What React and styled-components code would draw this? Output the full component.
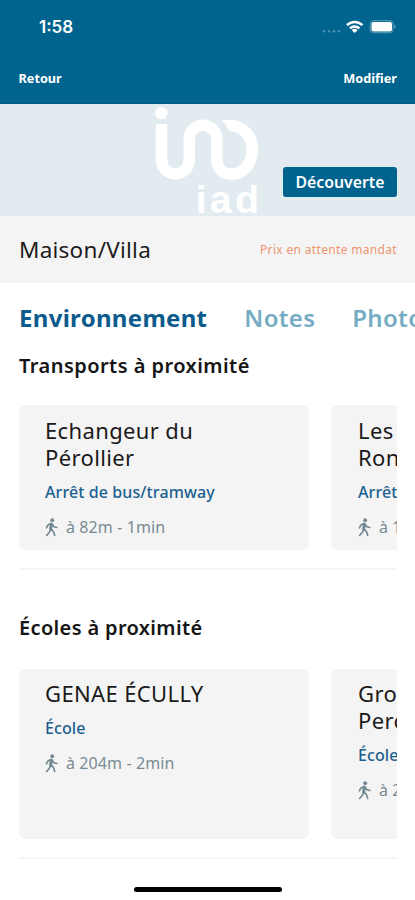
import styled, { createGlobalStyle } from "styled-components";

const GlobalStyle = createGlobalStyle`
  * {
    box-sizing: border-box;
    margin: 0;
    padding: 0;
  }
  body {
    background: #ffffff;
    font-family: "Noto Sans", "Open Sans", sans-serif;
    overflow: hidden;
  }
  button {
    border: none;
    background: none;
    font-family: inherit;
  }
`;

const Screen = styled.div`
  display: flex;
  flex-direction: column;
  width: 415px;
  height: 900px;
  overflow: hidden;
  background: #ffffff;
`;

const Header = styled.header`
  height: 104px;
  flex-shrink: 0;
  background: #00648f;
  border-bottom: 1px solid #00558a;
  color: #ffffff;
`;

const StatusBar = styled.div`
  display: flex;
  justify-content: space-between;
  align-items: center;
  height: 54px;
  padding: 0 18px 0 39px;
`;

const Time = styled.span`
  font-family: Inter, sans-serif;
  font-size: 17px;
  font-weight: 600;
  line-height: 20px;
`;

const NavBar = styled.div`
  display: flex;
  justify-content: space-between;
  align-items: center;
  height: 48px;
  padding: 0 18px 0 18.5px;
`;

const NavButton = styled.button`
  color: #ffffff;
  font-size: 12.7px;
  font-weight: 700;
`;

const Banner = styled.div`
  position: relative;
  display: flex;
  justify-content: center;
  height: 112px;
  flex-shrink: 0;
  background: #e1ebf0;
`;

const Badge = styled.div`
  position: absolute;
  right: 18px;
  bottom: 19px;
  display: flex;
  justify-content: center;
  align-items: center;
  width: 114px;
  height: 30px;
  border-radius: 3px;
  background: #00648f;
  color: #ffffff;
  font-size: 15.8px;
  font-weight: 600;
`;

const PropertyBar = styled.div`
  display: flex;
  justify-content: space-between;
  align-items: center;
  height: 67px;
  flex-shrink: 0;
  padding: 0 18px 0 19px;
  background: #f4f4f4;
`;

const PropertyType = styled.h1`
  color: #1c1c1c;
  font-size: 22.5px;
  font-weight: 400;
  letter-spacing: 0.25px;
  line-height: 30px;
`;

const Price = styled.span`
  color: #ee9470;
  font-size: 12px;
  letter-spacing: 0.33px;
`;

const Tabs = styled.nav`
  display: flex;
  gap: 37px;
  height: 63px;
  flex-shrink: 0;
  padding: 17px 0 0 19px;
  overflow: hidden;
`;

const Tab = styled.button`
  flex-shrink: 0;
  height: 36px;
  color: ${({ $active }) => ($active ? "#0b5b8c" : "#76acc3")};
  font-size: 24px;
  font-weight: ${({ $active }) => ($active ? 700 : 600)};
  letter-spacing: 0.3px;
  line-height: 36px;
`;

const Section = styled.section`
  display: flex;
  flex-direction: column;
  flex-shrink: 0;
  margin: 0 18px 0 19px;
  padding-bottom: ${({ $gap }) => $gap}px;
  border-bottom: 2px solid #f6f6f6;
`;

const SectionTitle = styled.h2`
  height: ${({ $height }) => $height}px;
  padding-top: 5px;
  color: #151515;
  font-size: 20px;
  font-weight: 600;
  letter-spacing: ${({ $spacing }) => $spacing}px;
  line-height: 30px;
`;

const CardList = styled.div`
  display: flex;
  gap: 22px;
  height: ${({ $height }) => $height}px;
  overflow: hidden;
`;

const Card = styled.article`
  width: 290px;
  flex-shrink: 0;
  padding: ${({ $top }) => $top}px 26px 0;
  border-radius: 7px;
  background: #f4f4f4;

  & + & {
    padding-left: 27px;
  }
`;

const CardTitle = styled.h3`
  color: #1a1a1a;
  font-size: 22px;
  font-weight: 400;
  letter-spacing: 0.37px;
  line-height: 27px;
  white-space: pre-line;
`;

const CardType = styled.p`
  margin-top: 9px;
  color: #1b6190;
  font-size: 16px;
  font-weight: 500;
  letter-spacing: 0.1px;
  line-height: 24px;
`;

const Distance = styled.p`
  display: flex;
  align-items: center;
  gap: 8px;
  margin-top: 11px;
  color: #788b94;
  font-size: 16px;
  letter-spacing: 0.1px;
  line-height: 24px;
`;

const HomeIndicator = styled.div`
  width: 148px;
  height: 5px;
  margin: 28px auto 0;
  border-radius: 3px;
  background: #000000;
`;

const Spacer = styled.div`
  height: 38px;
  flex-shrink: 0;
`;

const transports = [
  { name: "Echangeur du\nPérollier", type: "Arrêt de bus/tramway", distance: "à 82m - 1min" },
  { name: "Les\nRonces", type: "Arrêt de bus/tramway", distance: "à 152m - 2min" },
];

const schools = [
  { name: "GENAE ÉCULLY", type: "École", distance: "à 204m - 2min" },
  { name: "Groupe\nPerollier", type: "École", distance: "à 252m - 3min" },
];

function StatusIcons() {
  return (
    <svg width="76" height="18" viewBox="321 18 76 18" fill="none">
      <g fill="#4b91b0">
        <circle cx="324" cy="31.2" r="1.3" />
        <circle cx="329" cy="31.2" r="1.3" />
        <circle cx="334" cy="31.2" r="1.3" />
        <circle cx="339" cy="31.2" r="1.3" />
      </g>
      <g stroke="#ffffff" strokeWidth="2.5">
        <path d="M347 25.2a11 11 0 0 1 15.4 0" />
        <path d="M350 28.4a6.8 6.8 0 0 1 9.4 0" />
      </g>
      <path d="M354.7 33 351.8 30.2a4.2 4.2 0 0 1 5.8 0z" fill="#ffffff" />
      <rect x="370.2" y="20.7" width="23" height="12" rx="3.5" stroke="#64a0bb" />
      <rect x="371.5" y="22" width="20.5" height="9.5" rx="2" fill="#ffffff" />
      <path d="M394.5 24.8v4c1.8-.8 1.8-3.2 0-4z" fill="#64a0bb" />
    </svg>
  );
}

const Logo = styled.svg`
  display: block;
  width: 110px;
  height: 112px;
`;

function IadLogo() {
  return (
    <Logo viewBox="152.5 104 110 112" fill="none">
      <circle cx="160.8" cy="113" r="6.3" fill="#ffffff" />
      <path
        d="M161 124V160a13.8 13.8 0 0 0 27.7 0V139a13.8 13.8 0 0 1 27.6 0V159c0 9 6 15 14.5 15 12.5 0 21-10.5 21-24.5C251.8 135.5 242 125.5 229 125.5"
        stroke="#ffffff"
        strokeWidth="11.5"
      />
      <path d="M221 120H230V131.2H229Q226.5 125 221 120z" fill="#ffffff" />
      <text
        x="195.3 209.2 234.6"
        y="212.5"
        fill="#ffffff"
        fontFamily="Liberation Sans, sans-serif"
        fontSize="39.5"
        fontWeight="700"
      >
        iad
      </text>
    </Logo>
  );
}

function WalkIcon() {
  return (
    <svg width="13" height="19" viewBox="0 0 13 19" fill="none" stroke="#718791" strokeLinecap="round" strokeLinejoin="round">
      <circle cx="7.2" cy="2.2" r="1.9" fill="#718791" stroke="none" />
      <path d="M6.3 6.2 5.7 10.8" strokeWidth="3" />
      <path d="M6 5.4 2.7 7.2 1.5 9.8M7 6l1.9 2.7 2.9.8M5.5 11.3 4.4 14.3 1.6 17.5M6.2 11l2.5 3 1 3.5" strokeWidth="1.6" />
    </svg>
  );
}

function PlaceCard({ name, type, distance, top = 12 }) {
  return (
    <Card $top={top}>
      <CardTitle>{name}</CardTitle>
      <CardType>{type}</CardType>
      <Distance>
        <WalkIcon />
        {distance}
      </Distance>
    </Card>
  );
}

function App() {
  return (
    <>
      <GlobalStyle />
      <Screen>
        <Header>
          <StatusBar>
            <Time>1:58</Time>
            <StatusIcons />
          </StatusBar>
          <NavBar>
            <NavButton>Retour</NavButton>
            <NavButton>Modifier</NavButton>
          </NavBar>
        </Header>
        <Banner>
          <IadLogo />
          <Badge>Découverte</Badge>
        </Banner>
        <PropertyBar>
          <PropertyType>Maison/Villa</PropertyType>
          <Price>Prix en attente mandat</Price>
        </PropertyBar>
        <Tabs>
          <Tab $active>Environnement</Tab>
          <Tab>Notes</Tab>
          <Tab>Photos</Tab>
        </Tabs>
        <Section $gap={18}>
          <SectionTitle $height={59} $spacing={0.45}>
            Transports à proximité
          </SectionTitle>
          <CardList $height={145}>
            {transports.map((place) => (
              <PlaceCard key={place.name} {...place} />
            ))}
          </CardList>
        </Section>
        <Spacer />
        <Section $gap={18}>
          <SectionTitle $height={61} $spacing={0.35}>
            Écoles à proximité
          </SectionTitle>
          <CardList $height={170}>
            {schools.map((place) => (
              <PlaceCard key={place.name} top={11} {...place} />
            ))}
          </CardList>
        </Section>
        <HomeIndicator />
      </Screen>
    </>
  );
}

export default App;
